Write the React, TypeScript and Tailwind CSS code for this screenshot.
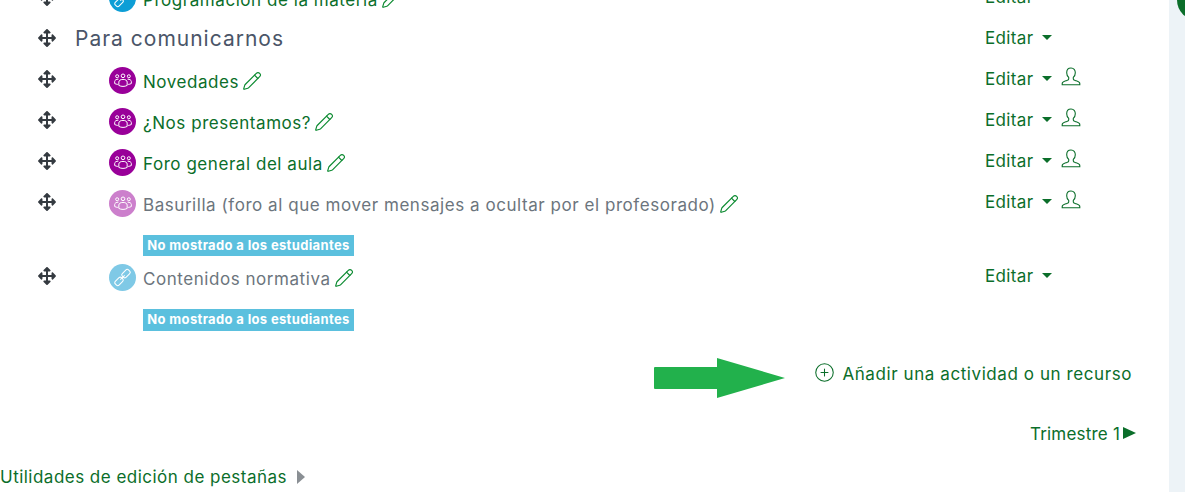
import { Pencil, CirclePlus } from 'lucide-react';
import { FaArrowsAlt } from 'react-icons/fa';

const green = 'text-[#0b6e2a]';

function GroupIcon() {
  return (
    <svg viewBox="0 0 24 24" className="w-[20px] h-[20px] mb-[1px]" fill="none" stroke="white" strokeWidth="1.2">
      <circle cx="12" cy="7" r="2.2" />
      <circle cx="5" cy="7.5" r="1.8" />
      <circle cx="19" cy="7.5" r="1.8" />
      <path d="M7 18.500v-4c0-2 2-3.200 5-3.200s5 1.200 5 3.200v4c-3 1.600-7 1.600-10 0z" />
      <path d="M6.500 11c-2.500 0-4.500 1-4.500 2.800v2.400c1 .6 2.400 1 3.800 1.100" />
      <path d="M17.500 11c2.500 0 4.500 1 4.500 2.800v2.400c-1 .6-2.400 1-3.800 1.100" />
    </svg>
  );
}

function LinkIcon() {
  return (
    <svg viewBox="0 0 24 24" className="w-[21px] h-[21px]" fill="none" stroke="white" strokeWidth="1.2">
      <rect x="13" y="2.500" width="6" height="10" rx="2" transform="rotate(45 16 7.500)" />
      <rect x="5" y="11.500" width="6" height="10" rx="2" transform="rotate(45 8 16.500)" />
      <path d="M9.500 14.500l5-5" />
    </svg>
  );
}

function Grip() {
  return <FaArrowsAlt className="w-[18px] h-[18px] text-[#343a40] shrink-0" />;
}

function Caret() {
  return (
    <svg viewBox="0 0 10 5" className="w-[10px] h-[5px] fill-[#0b6e2a]">
      <path d="M0 0h10L5 5z" />
    </svg>
  );
}

function UserIcon() {
  return (
    <svg viewBox="0 0 20 20" className="w-[20px] h-[20px]" fill="none" stroke="#0b6e2a" strokeWidth="1.1">
      <path d="M10 1c-2.800 0-4.300 2-4.300 4.700 0 2 .9 3.700 2 4.700v1.500c0 .7-.7 1.100-1.900 1.500-2.200.8-4.600 1.300-4.600 3.100v1.300h17.600v-1.300c0-1.800-2.400-2.300-4.600-3.100-1.200-.4-1.900-.8-1.900-1.500v-1.500c1.100-1 2-2.700 2-4.700C14.300 3 12.800 1 10 1z" />
    </svg>
  );
}

function EditMenu({ user }: { user?: boolean }) {
  return (
    <div className="w-[184px] shrink-0 flex items-center">
      <span className={`pt-[2px] text-[17px] tracking-[0.35px] ${green}`}>Editar</span>
      <span className="ml-[9px]"><Caret /></span>
      {user && <span className="ml-[9px] mb-[4px] flex"><UserIcon /></span>}
    </div>
  );
}

interface ActivityRowProps {
  icon: 'forum' | 'link' | 'tag';
  label: string;
  hidden?: boolean;
  user?: boolean;
  className?: string;
}

function ActivityRow({ icon, label, hidden, user, className = '' }: ActivityRowProps) {
  const circle = icon === 'tag' ? 'bg-[#0d9ed6]' : icon === 'link' ? 'bg-[#7fc9e6]' : hidden ? 'bg-[#cc7fcc]' : 'bg-[#990099]';
  return (
    <div className={`h-[41px] flex items-center pl-[38px] ${className}`}>
      <Grip />
      <div className="ml-[53px] flex-1 flex items-center pt-[4px]">
        <div className={`w-[27px] h-[27px] rounded-full flex items-center justify-center shrink-0 ${circle}`}>
          {icon === 'link' || icon === 'tag' ? <LinkIcon /> : <GroupIcon />}
        </div>
        <span className={`ml-[7px] pt-[5px] text-[17px] tracking-[0.55px] whitespace-nowrap ${hidden ? 'text-[#6c757d]' : green}`}>
          {label}
        </span>
        <Pencil className="ml-[3px] w-[20px] h-[20px] text-[#0b8a30]" strokeWidth={1.4} />
      </div>
      <EditMenu user={user} />
    </div>
  );
}

function HiddenBadge({ className }: { className: string }) {
  return (
    <div className={`ml-[143px] w-[211px] flex items-center justify-center bg-[#5bc0de] text-white text-[13px] font-bold tracking-[0.35px] whitespace-nowrap ${className}`}>
      No mostrado a los estudiantes
    </div>
  );
}

export default function App() {
  return (
    <div className="relative h-[492px] w-[1185px] overflow-hidden bg-white font-['Inter',sans-serif] flex">
      <main className="w-[1169px] shrink-0">
        <div className="-mt-[24px]">
          <ActivityRow icon="tag" label="Programación de la materia" />
        </div>
        <div className="h-[41px] flex items-center pl-[38px]">
          <Grip />
          <h3 className="ml-[19px] pt-[2px] flex-1 text-[21px] tracking-[1px] text-[#4a5568] whitespace-nowrap">Para comunicarnos</h3>
          <EditMenu />
        </div>
        <ActivityRow icon="forum" label="Novedades" user />
        <ActivityRow icon="forum" label="¿Nos presentamos?" user />
        <ActivityRow icon="forum" label="Foro general del aula" user />
        <ActivityRow icon="forum" label="Basurilla (foro al que mover mensajes a ocultar por el profesorado)" hidden user />
        <HiddenBadge className="mt-[13px] h-[21px]" />
        <ActivityRow icon="link" label="Contenidos normativa" hidden className="-mt-[1px]" />
        <HiddenBadge className="mt-[13px] h-[22px]" />

        <div className="mt-[22px] h-[41px] flex items-center justify-end pr-[37px]">
          <svg viewBox="0 0 132 40" className="w-[132px] h-[40px] mr-[28px] mt-[9px]">
            <path d="M1 9h62V0l68 20-68 20v-9H1a1 1 0 0 1-1-1V10a1 1 0 0 1 1-1z" fill="#22b14c" />
          </svg>
          <CirclePlus className={`w-[21px] h-[21px] mr-[7px] mb-[3px] ${green}`} strokeWidth={1.2} />
          <span className={`pt-[2px] text-[17px] tracking-[0.58px] whitespace-nowrap ${green}`}>Añadir una actividad o un recurso</span>
        </div>

        <div className="mt-[27px] h-[24px] flex items-center justify-end pr-[33px]">
          <span className={`pt-[3px] text-[17px] tracking-[0.2px] ${green}`}>Trimestre 1</span>
          <svg viewBox="0 0 13 12" className="w-[13px] h-[12px] fill-[#0b6e2a] ml-[3px]">
            <path d="M0 0l13 6-13 6z" />
          </svg>
        </div>

        <div className="mt-[20px] h-[24px] flex items-center">
          <span className={`pt-[2px] text-[17px] tracking-[0.48px] whitespace-nowrap ${green}`}>Utilidades de edición de pestañas</span>
          <svg viewBox="0 0 8 14" className="w-[8px] h-[14px] fill-[#8a8f94] ml-[10px]">
            <path d="M0 0l8 7-8 7z" />
          </svg>
        </div>
      </main>
      <aside className="flex-1 bg-[#edf3f7]" />
      <div className="absolute left-[1177px] -top-[20px] w-[40px] h-[40px] rounded-full bg-[#0b6e2a]" />
    </div>
  );
}
